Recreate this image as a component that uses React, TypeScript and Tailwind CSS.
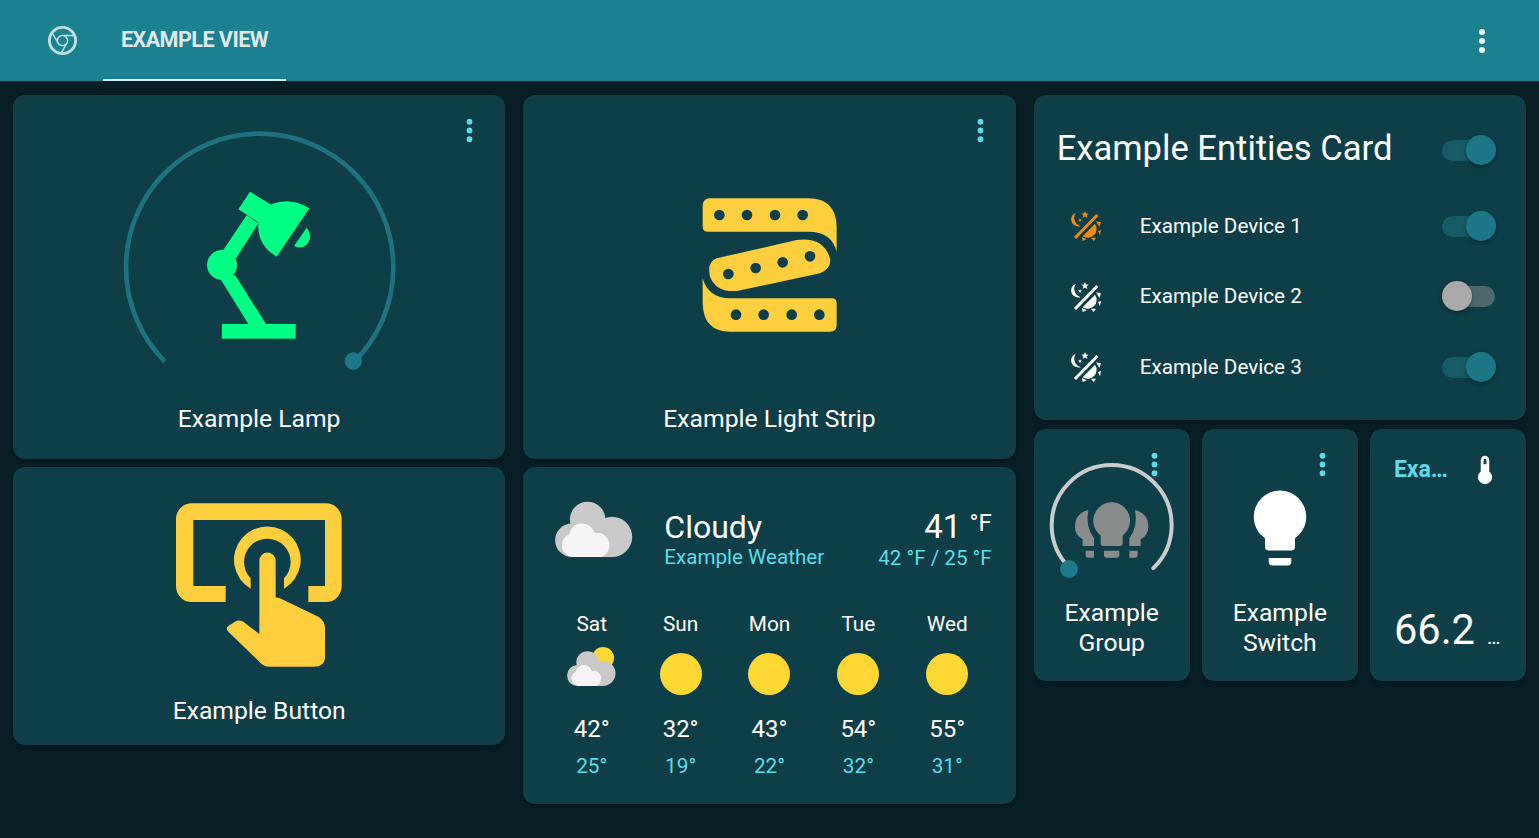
import React from "react";

const font = { fontFamily: "Roboto, sans-serif" };

function Dots({ className }: { className?: string }) {
  return (
    <svg viewBox="0 0 24 24" className={className} fill="currentColor">
      <path d="M12,16A2,2 0 0,1 14,18A2,2 0 0,1 12,20A2,2 0 0,1 10,18A2,2 0 0,1 12,16M12,10A2,2 0 0,1 14,12A2,2 0 0,1 12,14A2,2 0 0,1 10,12A2,2 0 0,1 12,10M12,4A2,2 0 0,1 14,6A2,2 0 0,1 12,8A2,2 0 0,1 10,6A2,2 0 0,1 12,4Z" />
    </svg>
  );
}

function CardDots() {
  return <Dots className="absolute right-[18px] top-[18px] h-[35px] w-[35px] text-[#5cd9e8]" />;
}

function Toggle({ on = true }: { on?: boolean }) {
  return (
    <div className={`relative h-[21px] w-[53px] rounded-full ${on ? "bg-[#175a66]" : "bg-[#4c696d]"}`}>
      <div
        className={`absolute top-[-5px] h-[30px] w-[30px] rounded-full shadow-[0_2px_4px_rgba(0,0,0,0.35)] ${
          on ? "right-[-1px] bg-[#1d7686]" : "left-0 bg-[#aaaaaa]"
        }`}
      />
    </div>
  );
}

function SunMoon({ color }: { color: string }) {
  const star = "M0 -11 L3.2 -3.4 L11 -3.4 L5.2 2 L7 10 L0 5.6 L-7 10 L-5.2 2 L-11 -3.4 L-3.2 -3.4 Z";
  return (
    <svg viewBox="0 0 90 90" className="h-[30px] w-[30px]" fill={color}>
      <path d="M15 5 C1 10 -3 25 3 35 C8 44 18 48 29 46 C19 42 11 34 10 24 C9 17 11 10 15 5 Z" />
      <path d={star} transform="translate(42 11)" />
      <path d={star} transform="translate(27 27) scale(0.55)" />
      <path d="M12 81 L79 12" stroke={color} strokeWidth="9" />
      <path d="M35 76 L72 38 A27 27 0 0 1 35 76 Z" />
      <path d="M75 31 L90 34 L85 48 Z" />
      <path d="M81 60 L90 57 L87 73 Z" />
      <path d="M60 80 L75 80 L68 90 Z" />
      <path d="M33 78 L47 85 L35 90 Z" />
    </svg>
  );
}

function Lamp() {
  return (
    <svg viewBox="0 0 900 780" className="ml-[2px] h-[260px] w-[300px] shrink-0">
      <path d="M165 725 A401 401 0 1 1 733 725" fill="none" stroke="#1f7180" strokeWidth="14" />
      <circle cx="730" cy="723" r="26" fill="#1c7788" />
      <g fill="#00ff85">
        <rect x="336" y="612" width="221" height="44" />
        <path d="M330 475 L375 465 L468 612 L415 612 Z" />
        <circle cx="336" cy="435" r="45" />
        <path d="M340 390 L410 285 L445 310 L378 415 Z" />
        <path d="M420 215 L385 268 L450 310 L485 255 Z" />
        <path d="M485 252 Q545 230 598 265 L500 410 Q440 375 445 310 Z" />
        <path d="M590 323 L552 378 Q590 392 600 355 Q600 335 590 323 Z" />
      </g>
    </svg>
  );
}

function Strip() {
  return (
    <svg viewBox="0 0 540 510" className="ml-[1px] h-[170px] w-[180px] shrink-0">
      <g fill="#fdce3e">
        <path d="M68 75 a20 20 0 0 1 20-20 H385 Q468 55 470 140 V215 Q455 155 385 155 H85 Q68 155 68 140 Z" />
        <path d="M68 295 Q85 355 150 355 H455 Q470 355 470 370 V435 Q470 455 450 455 H150 Q70 455 68 370 Z" />
        <path d="M110 235 L350 180 Q430 170 450 235 Q455 265 420 280 L175 332 Q110 340 90 290 Q80 245 110 235 Z" />
      </g>
      <g fill="#0e3e48">
        {[118, 201, 285, 368].map((x) => (
          <circle key={x} cx={x} cy="105" r="16" />
        ))}
        {[168, 251, 335, 418].map((x) => (
          <circle key={x} cx={x} cy="404" r="16" />
        ))}
        <circle cx="145" cy="282" r="16" />
        <circle cx="227" cy="264" r="16" />
        <circle cx="308" cy="247" r="16" />
        <circle cx="390" cy="229" r="16" />
      </g>
    </svg>
  );
}

function TapButton() {
  return (
    <svg viewBox="0 0 600 570" className="ml-[1px] h-[190px] w-[200px] shrink-0" fill="#fdce3e">
      <path d="M197 336 H95 a47 47 0 0 1 -47-47 V87 a47 47 0 0 1 47-47 H498 a47 47 0 0 1 47 47 V289 a47 47 0 0 1 -47 47 H445 V288 H495 V90 H100 V288 H197 Z" />
      <path d="M272 296 A100 100 0 1 1 372 296 V265 A70 70 0 1 0 272 265 Z" />
      <path d="M298 212 a24.5 24.5 0 0 1 49 0 V322 L360 325 L475 380 Q495 392 495 415 V500 Q495 530 460 530 H330 Q310 530 298 515 L205 425 Q195 415 205 408 L225 395 Q235 388 250 395 L298 432 Z" />
    </svg>
  );
}

function Cloud({ className, sun }: { className: string; sun?: boolean }) {
  return (
    <svg viewBox="75 45 232 185" className={className}>
      {sun && <circle cx="246" cy="97" r="52" fill="#fdd835" />}
      <g fill="#c9c9c9">
        <circle cx="172" cy="118" r="53" />
        <circle cx="245" cy="170" r="60" />
        <circle cx="125" cy="180" r="50" />
        <rect x="125" y="150" width="120" height="80" />
      </g>
      <g fill="#f5f5f5">
        <circle cx="155" cy="168" r="38" />
        <circle cx="130" cy="195" r="35" />
        <circle cx="200" cy="195" r="37" />
        <rect x="130" y="190" width="70" height="40" />
      </g>
    </svg>
  );
}

function GroupDial() {
  const bulb = "#898c8c";
  return (
    <svg viewBox="12 -3 468 450" className="h-[150px] w-[156px] shrink-0">
      <path
        d="M120 414.5 A180 180 0 1 1 370 414.5"
        fill="none"
        stroke="#c8cccc"
        strokeWidth="12"
        strokeLinecap="round"
      />
      <circle cx="117" cy="417" r="27" fill="#1d7a8a" />
      <g fill={bulb}>
        <path d="M245 217 a55 55 0 0 0 -33 99 V340 q0 8 8 8 h50 q8 0 8-8 V316 a55 55 0 0 0 -33 -99 Z" />
        <path d="M222 362 H268 V375 q0 8 -8 8 H230 q-8 0 -8 -8 Z" />
        <path d="M175 240 Q135 250 135 290 Q135 315 158 328 V348 H192 V325 Q165 290 175 240 Z" />
        <path d="M315 240 Q355 250 355 290 Q355 315 332 328 V348 H298 V325 Q325 290 315 240 Z" />
        <path d="M167 362 H192 V383 H175 q-8 0 -8 -8 Z" />
        <path d="M323 362 H298 V383 H315 q8 0 8 -8 Z" />
      </g>
    </svg>
  );
}

const forecast = [
  { day: "Sat", hi: "42°", lo: "25°", cloudy: true },
  { day: "Sun", hi: "32°", lo: "19°" },
  { day: "Mon", hi: "43°", lo: "22°" },
  { day: "Tue", hi: "54°", lo: "32°" },
  { day: "Wed", hi: "55°", lo: "31°" },
];

const devices = [
  { name: "Example Device 1", color: "#f18a14", on: true },
  { name: "Example Device 2", color: "#ffffff", on: false },
  { name: "Example Device 3", color: "#ffffff", on: true },
];

const card = "relative rounded-[12px] bg-[#0e3e48] shadow-[0_2px_3px_rgba(0,0,0,0.3)]";

export default function App() {
  return (
    <div className="min-h-screen bg-[#071e27] text-white" style={font}>
      {/* Header */}
      <header className="flex h-[81px] items-center bg-[#1c8191] pr-[39px]">
        <div className="flex w-[103px] justify-center pl-[22px]">
          <svg viewBox="0 0 24 24" className="h-[35px] w-[35px] text-[#c3dde1]" fill="currentColor">
            <path d="M12,20L15.46,14H15.45C15.79,13.4 16,12.73 16,12C16,10.8 15.46,9.73 14.62,9H19.41C19.79,9.93 20,10.94 20,12A8,8 0 0,1 12,20M4,12C4,10.54 4.39,9.18 5.07,8L8.54,14H8.55C9.24,15.19 10.5,16 12,16C12.45,16 12.88,15.91 13.29,15.77L10.89,19.91C7,19.37 4,16.04 4,12M15,12A3,3 0 0,1 12,15A3,3 0 0,1 9,12A3,3 0 0,1 12,9A3,3 0 0,1 15,12M12,4C14.96,4 17.54,5.61 18.92,8H12C10.06,8 8.44,9.38 8.08,11.21L5.7,7.08C7.16,5.21 9.44,4 12,4M12,2A10,10 0 0,0 2,12A10,10 0 0,0 12,22A10,10 0 0,0 22,12A10,10 0 0,0 12,2Z" />
          </svg>
        </div>
        <div className="flex h-full w-[183px] items-center justify-center border-b-[2px] border-[#d8eef0] pt-[2px] text-[21.6px] font-bold tracking-[-0.55px] text-[#dfe8ea]">
          EXAMPLE VIEW
        </div>
        <Dots className="ml-auto h-[36px] w-[36px] text-[#f0f5f6]" />
      </header>

      <main className="grid grid-cols-3 items-start gap-[18px] px-[13px] pb-[34px] pt-[14px]">
        {/* Column 1 */}
        <div className="flex flex-col gap-[8px]">
          <section className={`${card} flex h-[364px] flex-col items-center pt-[25px]`}>
            <CardDots />
            <Lamp />
            <div className="mt-[25px] text-[24.7px] leading-[28px]">Example Lamp</div>
          </section>
          <section className={`${card} flex h-[278px] flex-col items-center pt-[23px]`}>
            <TapButton />
            <div className="mt-[17px] text-[24.7px] leading-[28px]">Example Button</div>
          </section>
        </div>

        {/* Column 2 */}
        <div className="flex flex-col gap-[8px]">
          <section className={`${card} flex h-[364px] flex-col items-center pt-[85px]`}>
            <CardDots />
            <Strip />
            <div className="mt-[55px] text-[24.7px] leading-[28px]">Example Light Strip</div>
          </section>
          <section className={`${card} h-[337px] px-[24px] pt-[28px]`}>
            <div className="flex items-start">
              <Cloud className="ml-[8px] h-[62px] w-[78px] shrink-0" />
              <div className="ml-[31px] mt-[13px]">
                <div className="text-[32px] leading-[38px]">Cloudy</div>
                <div className="mt-[-2px] text-[20.6px] leading-[26px] text-[#5cdcea]">Example Weather</div>
              </div>
              <div className="ml-auto mt-[13px] text-right">
                <div className="text-[33px] leading-[38px]">
                  41 <span className="relative top-[-7px] text-[24px]">°F</span>
                </div>
                <div className="mt-[-4px] text-[20.6px] leading-[26px] text-[#5cdcea]">42 °F / 25 °F</div>
              </div>
            </div>
            <div className="mt-[40px] grid grid-cols-5 text-center">
              {forecast.map((f) => (
                <div key={f.day} className="flex flex-col items-center">
                  <div className="text-[20.8px] leading-[26px]">{f.day}</div>
                  <div className="mt-[15px] flex h-[44px] items-center justify-center">
                    {f.cloudy ? (
                      <Cloud sun className="mb-[15px] h-[39px] w-[49px]" />
                    ) : (
                      <div className="h-[42px] w-[42px] rounded-full bg-[#fdd835]" />
                    )}
                  </div>
                  <div className="mt-[19px] text-[24px] leading-[28px]">{f.hi}</div>
                  <div className="mt-[10px] text-[20.8px] leading-[26px] text-[#5cdcea]">{f.lo}</div>
                </div>
              ))}
            </div>
          </section>
        </div>

        {/* Column 3 */}
        <div className="flex flex-col gap-[9px]">
          <section className={`${card} h-[325px] pl-[24px] pr-[31px]`}>
            <div className="flex h-[96px] items-start justify-between pt-[33px]">
              <div className="ml-[-1px] text-[34.6px] leading-[40px]">Example Entities Card</div>
              <div className="mt-[12px]">
                <Toggle />
              </div>
            </div>
            <div className="flex flex-col">
              {devices.map((d) => (
                <div key={d.name} className="flex h-[70.5px] items-center">
                  <div className="flex w-[56px] justify-center">
                    <SunMoon color={d.color} />
                  </div>
                  <div className="ml-[26px] text-[20.7px]">{d.name}</div>
                  <div className="ml-auto">
                    <Toggle on={d.on} />
                  </div>
                </div>
              ))}
            </div>
          </section>

          <div className="grid grid-cols-3 gap-[12px]">
            <section className={`${card} flex h-[252px] flex-col items-center`}>
              <GroupDial />
              <div className="mt-[19px] text-center text-[24.7px] leading-[30px]">
                Example
                <br />
                Group
              </div>
              <CardDots />
            </section>
            <section className={`${card} flex h-[252px] flex-col items-center pt-[54px]`}>
              <CardDots />
              <svg viewBox="0 0 24 24" className="h-[90px] w-[90px] shrink-0" fill="#ffffff">
                <path d="M12,2A7,7 0 0,0 5,9C5,11.38 6.19,13.47 8,14.74V17A1,1 0 0,0 9,18H15A1,1 0 0,0 16,17V14.74C17.81,13.47 19,11.38 19,9A7,7 0 0,0 12,2M9,21A1,1 0 0,0 10,22H14A1,1 0 0,0 15,21V20H9V21Z" />
              </svg>
              <div className="mt-[25px] text-center text-[24.7px] leading-[30px]">
                Example
                <br />
                Switch
              </div>
            </section>
            <section className={`${card} flex h-[252px] flex-col justify-between pb-[26px] pl-[24px] pr-[24px] pt-[23px]`}>
              <div className="flex items-center justify-between">
                <div className="text-[23px] font-bold leading-[36px] text-[#5cdcea]">Exa…</div>
                <svg viewBox="0 0 24 24" className="h-[34px] w-[34px] shrink-0" fill="#ffffff">
                  <path d="M15 13V5A3 3 0 0 0 9 5V13A5 5 0 1 0 15 13M12 4A1 1 0 0 1 13 5V8H11V5A1 1 0 0 1 12 4Z" />
                </svg>
              </div>
              <div className="flex items-baseline">
                <span className="text-[41.6px] leading-[50px]">66.2</span>
                <span className="ml-[12px] text-[20px] leading-[20px]">…</span>
              </div>
            </section>
          </div>
        </div>
      </main>
    </div>
  );
}
